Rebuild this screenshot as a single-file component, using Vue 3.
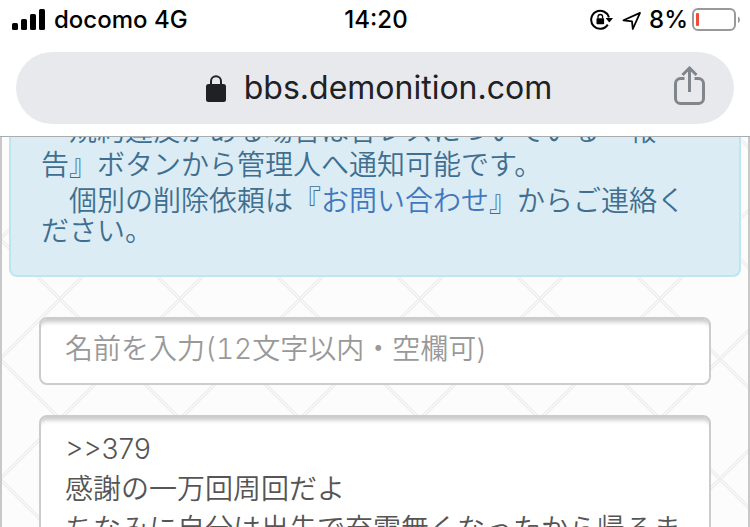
<template>
  <div class="phone">
    <header class="browser-header">
      <div class="status-bar">
        <div class="status-left">
          <svg class="signal" width="34" height="22" viewBox="0 0 34 22" aria-hidden="true">
            <rect x="0" y="14" width="6" height="7" rx="1.5" />
            <rect x="9" y="10" width="6" height="11" rx="1.5" />
            <rect x="18" y="5" width="6" height="16" rx="1.5" />
            <rect x="27" y="0" width="6" height="21" rx="1.5" />
          </svg>
          <span>{{ status.carrier }} {{ status.network }}</span>
        </div>
        <time>{{ status.time }}</time>
        <div class="status-right">
          <svg class="rotation" width="24" height="22" viewBox="0 0 24 22" aria-hidden="true">
            <path d="M18.8 15.6A9 9 0 1 1 19.9 8.5" fill="none" stroke="#000" stroke-width="2" />
            <path d="M16.6 9h7.4l-3.7 4.6z" />
            <rect x="7.5" y="9.3" width="7.6" height="6" rx="0.8" />
            <path d="M9 9.5V7.8a2.3 2.3 0 0 1 4.6 0v1.7" fill="none" stroke="#000" stroke-width="1.3" />
          </svg>
          <svg class="location" width="20" height="20" viewBox="0 0 20 20" aria-hidden="true">
            <path d="M2.5 10.3 19 2.9 11.8 19 11 11.4z" fill="none" stroke="#000" stroke-width="1.8" stroke-linejoin="round" />
          </svg>
          <span>{{ status.battery }}%</span>
          <svg class="battery" width="48" height="24" viewBox="0 0 48 24" aria-hidden="true">
            <rect x="1" y="1" width="42" height="21" rx="5" fill="none" stroke="#999" stroke-width="2" />
            <rect x="4" y="5" width="3" height="13" rx="1" fill="#f04b3a" />
            <path d="M46 8.5q2 1 2 3.2t-2 3.2z" fill="#999" />
          </svg>
        </div>
      </div>

      <div class="address-bar">
        <div class="address">
          <svg width="20" height="27" viewBox="0 0 20 27" aria-hidden="true">
            <rect x="0" y="9" width="20" height="18" rx="2.5" fill="#202124" />
            <path d="M5 10V6.2a5 5 0 0 1 10 0V10" fill="none" stroke="#202124" stroke-width="2" />
          </svg>
          <span>bbs.demonition.com</span>
        </div>
        <button type="button" class="share" aria-label="共有">
          <svg width="32" height="44" viewBox="0 0 32 44" fill="none" stroke="#80868b" stroke-width="3">
            <path d="M10.5 12.5H6.5a5 5 0 0 0-5 5v15a5 5 0 0 0 5 5h18a5 5 0 0 0 5-5v-15a5 5 0 0 0-5-5h-4" />
            <path d="M15.5 26V2.5M8.5 9l7-7 7 7" />
          </svg>
        </button>
      </div>
    </header>

    <main class="page">
      <div class="alert">
        <p class="rule">　規約違反がある場合は各レスについている『報告』ボタンから管理人へ通知可能です。</p>
        <p class="contact">　個別の削除依頼は『<a href="#">お問い合わせ</a>』からご連絡ください。</p>
      </div>

      <form class="post-form" @submit.prevent>
        <input
          v-model="name"
          class="form-control name"
          type="text"
          maxlength="12"
          aria-label="名前"
          placeholder="名前を入力(12文字以内・空欄可)"
        >
        <textarea v-model="message" class="form-control message" aria-label="本文"></textarea>
      </form>
    </main>
  </div>
</template>

<script setup>
import { ref, reactive } from 'vue'

const status = reactive({
  carrier: 'docomo',
  network: '4G',
  time: '14:20',
  battery: 8
})

const name = ref('')
const message = ref('>>379\n感謝の一万回周回だよ\nちなみに自分は出先で充電無くなったから帰るま')
</script>

<style>
body {
  margin: 0;
  overflow: hidden;
}
</style>

<style scoped>
.phone {
  display: flex;
  flex-direction: column;
  height: 100vh;
  overflow: hidden;
  background: #fff;
  font-family: Inter, "Noto Sans CJK JP", sans-serif;
}

.browser-header {
  flex: none;
  border-bottom: 1px solid #a9adb0;
  background: #fff;
}

.status-bar {
  display: grid;
  grid-template-columns: 1fr auto 1fr;
  align-items: center;
  height: 40px;
  padding: 0 10px 0 12px;
  color: #000;
  font-size: 24px;
  font-weight: 500;
  line-height: 40px;
}

.status-left,
.status-right {
  display: flex;
  align-items: center;
  gap: 8px;
  white-space: nowrap;
}

.status-right {
  justify-content: flex-end;
}

.battery {
  margin-left: -4px;
}

.address-bar {
  display: grid;
  grid-template-columns: 1fr auto 1fr;
  align-items: center;
  height: 72px;
  margin: 12px 16px;
  border-radius: 36px;
  background: #e8e9ed;
}

.address {
  display: flex;
  grid-column: 2;
  align-items: center;
  gap: 18px;
  margin-left: 8px;
  color: #202124;
  font-size: 32px;
  line-height: 40px;
}

.share {
  display: flex;
  justify-self: end;
  margin-right: 28px;
  padding: 0;
  border: 0;
  background: none;
  cursor: pointer;
}

/* double hairlines crossing in the middle and at the corners of each tile */
.page {
  --line: #efefef;
  --stripes:
    transparent 0.4%, var(--line) 0.4%, var(--line) 1%, transparent 1%,
    transparent 49%, var(--line) 49%, var(--line) 49.6%, transparent 49.6%,
    transparent 50.4%, var(--line) 50.4%, var(--line) 51%, transparent 51%,
    transparent 99%, var(--line) 99%, var(--line) 99.6%, transparent 99.6%;
  flex: 1;
  min-height: 0;
  overflow: hidden;
  border: solid #c8c8c8;
  border-width: 0 2px;
  background-color: #fcfcfc;
  background-image:
    linear-gradient(45deg, var(--stripes)),
    linear-gradient(-45deg, var(--stripes));
  background-position: -2px 102px;
  background-size: 120px 120px;
}

/* scrolled so the first line is partly under the header */
.alert {
  margin: -23px 7px 0;
  padding: 0 30px 29px;
  border: 2px solid #bfe6f0;
  border-top: 0;
  border-radius: 0 0 8px 8px;
  background: #dcecf4;
  color: #3f6f90;
  font-size: 28px;
  font-weight: 350;
  text-spacing-trim: space-all;
}

.alert p {
  margin: 0;
}

.rule {
  line-height: 34px;
}

.alert .contact {
  margin-top: 4px;
  line-height: 30px;
}

.alert a {
  color: #4078c0;
  text-decoration: none;
}

.post-form {
  display: flex;
  flex-direction: column;
  gap: 30px;
  padding: 40px 37px 0;
}

.form-control {
  box-sizing: border-box;
  width: 100%;
  padding: 12px 24px;
  border: 2px solid #ccc;
  border-radius: 8px;
  outline: 0;
  background: #fff;
  box-shadow: inset 0 7px 4px -4px rgba(0, 0, 0, 0.22);
  color: #555;
  font-family: inherit;
  font-size: 28px;
  font-weight: 350;
  line-height: 40px;
}

.form-control::placeholder {
  color: #999;
  opacity: 1;
}

.name {
  height: 68px;
  padding-bottom: 16px;
  font-variant-numeric: tabular-nums;
}

.message {
  height: 200px;
  overflow: hidden;
  resize: none;
}
</style>
